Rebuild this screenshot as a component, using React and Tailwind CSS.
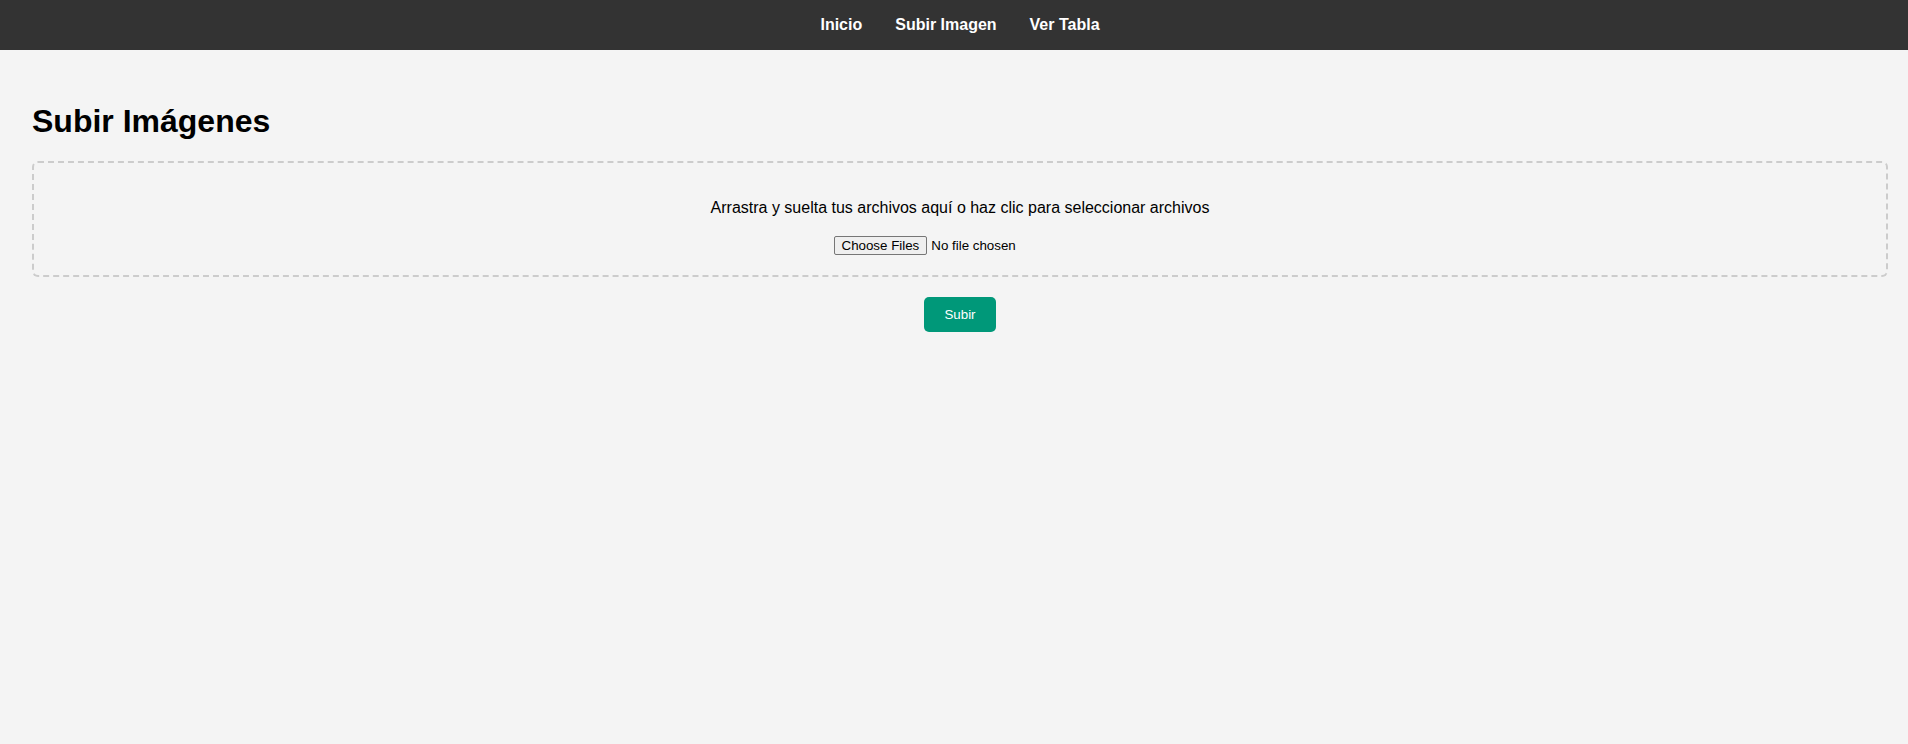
export default function App() {
  return (
    <div className="min-h-[744px] bg-[#f4f4f4] font-['Liberation_Sans',Arial,sans-serif] text-black">
      {/* Nav */}
      <nav className="h-[50px] bg-[#333] flex items-center justify-center gap-[33px] pl-[12px]">
        <a href="#" className="text-white font-bold text-base">Inicio</a>
        <a href="#" className="text-white font-bold text-base">Subir Imagen</a>
        <a href="#" className="text-white font-bold text-base">Ver Tabla</a>
      </nav>

      <main className="pt-8 pl-8 pr-5">
        <h1 className="text-[32px] font-bold my-[21.44px] leading-[36px]">Subir Imágenes</h1>

        {/* Drop zone */}
        <div className="border-2 border-dashed border-[#ccc] rounded-[6px] px-5 pt-5 pb-[18px] text-center">
          <p className="my-4 text-base leading-[18px]">
            Arrastra y suelta tus archivos aquí o haz clic para seleccionar archivos
          </p>
          <input type="file" multiple className="text-[13.333px] leading-[normal] font-['Liberation_Sans',Arial,sans-serif] file:px-[7px] file:py-[1px] file:mr-[4px] file:border file:border-[#767676] file:rounded-[2px] file:bg-[#efefef] file:text-black" />
        </div>

        <div className="flex justify-center mt-5">
          <button className="bg-[#009879] text-white text-[13.333px] px-5 py-[10px] rounded-[5px] leading-[15px]">
            Subir
          </button>
        </div>
      </main>
    </div>
  )
}
